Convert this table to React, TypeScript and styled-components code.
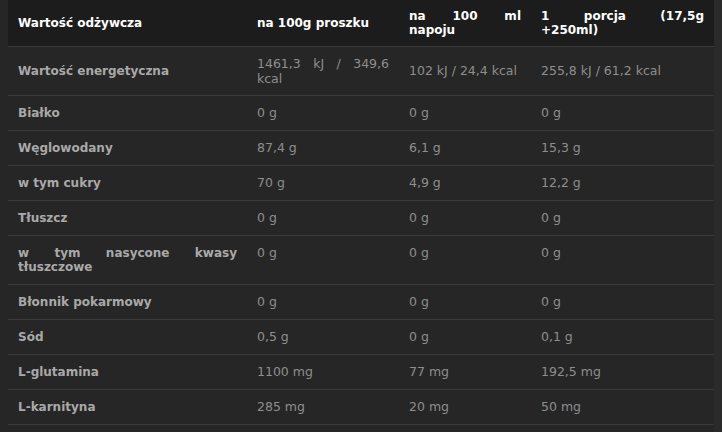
import React from "react";
import styled, { createGlobalStyle } from "styled-components";

const Global = createGlobalStyle`
  html, body {
    margin: 0;
    padding: 0;
    background: #262626;
  }
  body {
    font-family: "DejaVu Sans", Verdana, sans-serif;
  }
`;

const Page = styled.div`
  width: 722px;
  height: 432px;
  display: flex;
  background: #262626;
  overflow: hidden;
`;

const Gutter = styled.div<{ $side: "left" | "right" }>`
  flex: 0 0 8px;
  background: ${(p) => (p.$side === "right" ? "#2a2a2a" : "#262626")};
`;

const Table = styled.div`
  flex: 0 0 706px;
  display: flex;
  flex-direction: column;
`;

const COLS = "239px 152px 132px 183px";

const HeaderRow = styled.div`
  display: grid;
  grid-template-columns: ${COLS};
  align-items: center;
  box-sizing: border-box;
  min-height: 47px;
  padding: 9px 0;
  background: #1c1c1c;
  border-bottom: 1px solid #3a3a3a;
`;

const HeadCell = styled.div`
  padding: 0 10px;
  font-size: 12px;
  font-weight: bold;
  line-height: 14px;
  color: #ffffff;
  text-align: justify;
`;

const Row = styled.div<{ $tall?: boolean; $align?: string }>`
  display: grid;
  grid-template-columns: ${COLS};
  align-items: ${(p) => p.$align || "center"};
  box-sizing: border-box;
  min-height: ${(p) => (p.$tall ? 49 : 35)}px;
  padding: ${(p) => (p.$tall ? "9px 0 9px" : "10px 0")};
  border-bottom: 1px solid #3a3a3a;
`;

const Label = styled.div<{ $shift?: boolean }>`
  padding: 0 10px;
  font-size: 12px;
  font-weight: bold;
  line-height: 14px;
  color: #a9a9a9;
  text-align: justify;
`;

const Value = styled.div<{ $lh?: number }>`
  padding: 0 10px;
  font-size: 12.5px;
  line-height: ${(p) => p.$lh || 14}px;
  color: #8e8e8e;
  text-align: justify;
`;

const FullLine = styled.span`
  display: block;
  text-align: justify;
  text-align-last: justify;
`;

const LastLine = styled.span`
  display: block;
`;

function Lines({ text }: { text: string | string[] }) {
  if (typeof text === "string") return <>{text}</>;
  return (
    <>
      {text.map((t, i) =>
        i < text.length - 1 ? (
          <FullLine key={i}>{t}</FullLine>
        ) : (
          <LastLine key={i}>{t}</LastLine>
        )
      )}
    </>
  );
}

type Item = {
  label: string | string[];
  values: (string | string[])[];
  tall?: boolean;
  align?: string;
};

const headers: (string | string[])[] = [
  "Wartość odżywcza",
  "na 100g proszku",
  ["na 100 ml", "napoju"],
  ["1 porcja (17,5g", "+250ml)"],
];

const rows: Item[] = [
  {
    label: "Wartość energetyczna",
    values: [["1461,3 kJ / 349,6", "kcal"], "102 kJ / 24,4 kcal", "255,8 kJ / 61,2 kcal"],
    tall: true,
  },
  { label: "Białko", values: ["0 g", "0 g", "0 g"] },
  { label: "Węglowodany", values: ["87,4 g", "6,1 g", "15,3 g"] },
  { label: "w tym cukry", values: ["70 g", "4,9 g", "12,2 g"] },
  { label: "Tłuszcz", values: ["0 g", "0 g", "0 g"] },
  {
    label: ["w tym nasycone kwasy", "tłuszczowe"],
    values: ["0 g", "0 g", "0 g"],
    tall: true,
    align: "center",
  },
  { label: "Błonnik pokarmowy", values: ["0 g", "0 g", "0 g"] },
  { label: "Sód", values: ["0,5 g", "0 g", "0,1 g"] },
  { label: "L-glutamina", values: ["1100 mg", "77 mg", "192,5 mg"] },
  { label: "L-karnityna", values: ["285 mg", "20 mg", "50 mg"] },
];

const TopValue = styled(Value)`
  align-self: start;
  padding-top: 1px;
`;

export default function App() {
  return (
    <>
      <Global />
      <Page>
        <Gutter $side="left" />
        <Table>
          <HeaderRow>
            {headers.map((h, i) => (
              <HeadCell key={i}>
                <Lines text={h} />
              </HeadCell>
            ))}
          </HeaderRow>
          {rows.map((r, i) => {
            const multiLabel = Array.isArray(r.label);
            return (
              <Row key={i} $tall={r.tall} $align={r.align}>
                <Label>
                  <Lines text={r.label} />
                </Label>
                {r.values.map((v, j) =>
                  multiLabel ? (
                    <TopValue key={j}>
                      <Lines text={v} />
                    </TopValue>
                  ) : (
                    <Value key={j} $lh={Array.isArray(v) ? 15 : 14}>
                      <Lines text={v} />
                    </Value>
                  )
                )}
              </Row>
            );
          })}
        </Table>
        <Gutter $side="right" />
      </Page>
    </>
  );
}
